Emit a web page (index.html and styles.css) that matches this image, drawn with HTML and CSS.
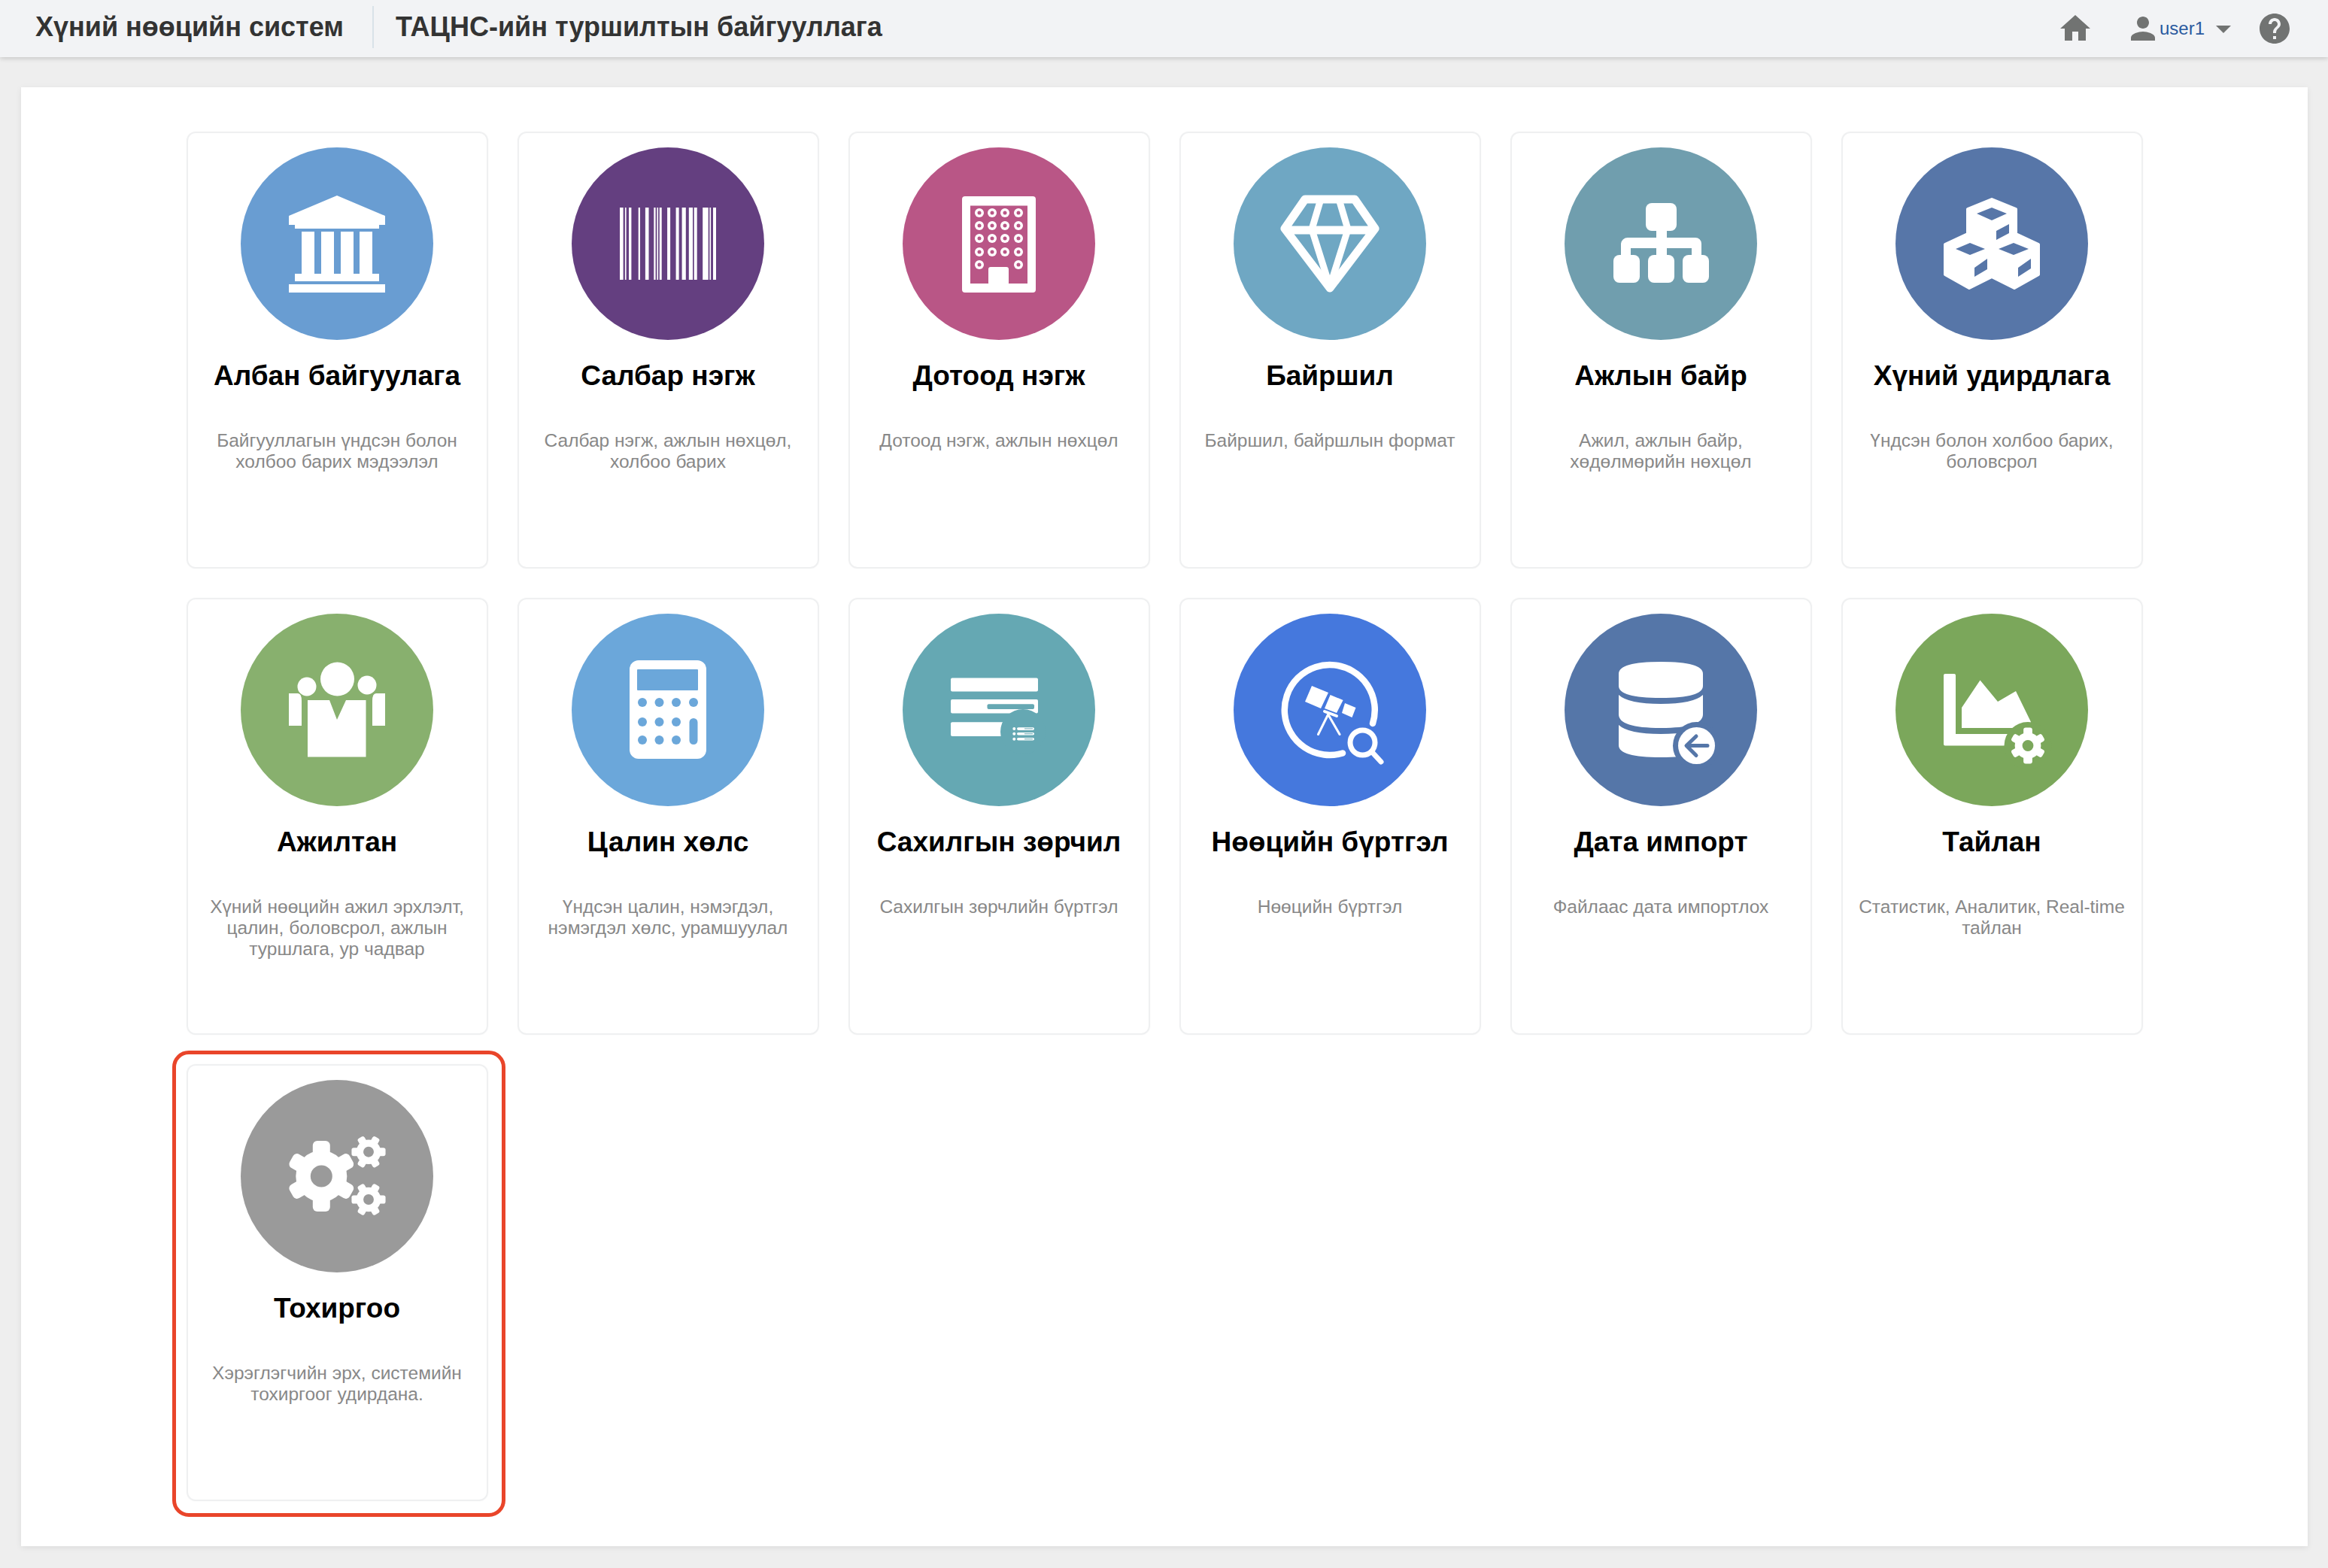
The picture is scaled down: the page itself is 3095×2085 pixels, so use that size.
FILE: index.html
```html
<!DOCTYPE html>
<html lang="en">
<head>
    <meta charset="UTF-8">
    <title>Хүний нөөцийн систем</title>
    <link rel="stylesheet" href="styles.css">
</head>
<body>
    <svg class="sprite" aria-hidden="true">
        <defs>
            <g id="gear">
                <circle r="34"/>
                <rect x="-11.500" y="-47" width="23" height="94" rx="6"/>
                <rect x="-10.500" y="-46" width="21" height="92" rx="6" transform="rotate(60)"/>
                <rect x="-10.500" y="-46" width="21" height="92" rx="6" transform="rotate(120)"/>
                <circle r="14.500" fill="currentColor"/>
            </g>
        </defs>
    </svg>

    <header class="topbar">
        <div class="brand">Хүний нөөцийн систем</div>
        <div class="org">ТАЦНС-ийн туршилтын байгууллага</div>
        <nav class="tools">
            <svg class="tool home" viewBox="0 0 24 24"><path d="M10 20v-6h4v6h5v-8h3L12 3 2 12h3v8z"/></svg>
            <div class="user">
                <svg class="tool" viewBox="0 0 24 24"><path d="M12 12c2.21 0 4-1.79 4-4s-1.79-4-4-4-4 1.79-4 4 1.79 4 4 4zm0 2c-2.67 0-8 1.34-8 4v2h16v-2c0-2.66-5.33-4-8-4z"/></svg>
                <span class="user-name">user1</span>
                <svg class="tool caret" viewBox="0 0 24 24"><path d="M7 10l5 5 5-5z"/></svg>
            </div>
            <svg class="tool" viewBox="0 0 24 24"><path d="M12 2C6.48 2 2 6.48 2 12s4.48 10 10 10 10-4.48 10-10S17.52 2 12 2zm1 17h-2v-2h2v2zm2.07-7.75l-.9.92C13.45 12.9 13 13.5 13 15h-2v-.5c0-1.1.45-2.1 1.17-2.83l1.24-1.26c.37-.36.59-.86.59-1.41 0-1.1-.9-2-2-2s-2 .9-2 2H8c0-2.21 1.79-4 4-4s4 1.79 4 4c0 .88-.36 1.68-.93 2.25z"/></svg>
        </nav>
    </header>

    <main class="panel">
        <div class="cards">
            <a class="card">
                <svg class="icon c-bank" viewBox="0 0 256 256">
                    <circle class="bg" cx="128" cy="128" r="128"/>
                    <path class="fg" d="M128 64l64 27v12h-8v5H72v-5h-8V91zM81 112h17v56H81zM107 112h17v56h-17zM133 112h17v56h-17zM158 112h17v56h-17zM72 168h112v10H72zM64 182h128v11H64z"/>
                </svg>
                <h2>Албан байгуулага</h2>
                <p>Байгууллагын үндсэн болон холбоо барих мэдээлэл</p>
            </a>
            <a class="card">
                <svg class="icon c-branch" viewBox="0 0 256 256">
                    <circle class="bg" cx="128" cy="128" r="128"/>
                    <path class="fg" d="M64 80h4.6v96H64zM70.9 80h1.7v96h-1.7zM76 80h3.4v96H76zM88.7 80H91v96h-2.3zM97.9 80h4.6v96h-4.6zM109.3 80h2.3v96h-2.3zM113.4 80h1.7v96h-1.7zM116.8 80h2.9v96h-2.9zM127.1 80h4v96h-4zM138.6 80h4v96h-4zM146.6 80h5.2v96h-5.2zM155.8 80h5.2v96h-5.2zM162.7 80h4v96h-4zM174.2 80h7.5v96h-7.5zM183.4 80h1.7v96h-1.7zM188 80h4v96h-4z"/>
                </svg>
                <h2>Салбар нэгж</h2>
                <p>Салбар нэгж, ажлын нөхцөл, холбоо барих</p>
            </a>
            <a class="card">
                <svg class="icon c-dept" viewBox="0 0 256 256">
                    <circle class="bg" cx="128" cy="128" r="128"/>
                    <rect class="fg" x="79" y="65" width="98" height="128" rx="4"/>
                    <rect class="cut" x="90" y="77.5" width="76" height="103.5"/>
                    <rect class="fg" x="114" y="159" width="27" height="24" rx="3"/>
                    <g class="fg">
                        <circle cx="102" cy="87" r="6"/><circle cx="119" cy="87" r="6"/><circle cx="136" cy="87" r="6"/><circle cx="154" cy="87" r="6"/>
                        <circle cx="102" cy="104" r="6"/><circle cx="119" cy="104" r="6"/><circle cx="136" cy="104" r="6"/><circle cx="154" cy="104" r="6"/>
                        <circle cx="102" cy="121" r="6"/><circle cx="119" cy="121" r="6"/><circle cx="136" cy="121" r="6"/><circle cx="154" cy="121" r="6"/>
                        <circle cx="102" cy="139" r="6"/><circle cx="119" cy="139" r="6"/><circle cx="136" cy="139" r="6"/><circle cx="154" cy="139" r="6"/>
                        <circle cx="102" cy="156" r="6"/><circle cx="154" cy="156" r="6"/>
                    </g>
                    <g class="cut">
                        <circle cx="102" cy="87" r="2.5"/><circle cx="119" cy="87" r="2.5"/><circle cx="136" cy="87" r="2.5"/><circle cx="154" cy="87" r="2.5"/>
                        <circle cx="102" cy="104" r="2.5"/><circle cx="119" cy="104" r="2.5"/><circle cx="136" cy="104" r="2.5"/><circle cx="154" cy="104" r="2.5"/>
                        <circle cx="102" cy="121" r="2.5"/><circle cx="119" cy="121" r="2.5"/><circle cx="136" cy="121" r="2.5"/><circle cx="154" cy="121" r="2.5"/>
                        <circle cx="102" cy="139" r="2.5"/><circle cx="119" cy="139" r="2.5"/><circle cx="136" cy="139" r="2.5"/><circle cx="154" cy="139" r="2.5"/>
                        <circle cx="102" cy="156" r="2.5"/><circle cx="154" cy="156" r="2.5"/>
                    </g>
                </svg>
                <h2>Дотоод нэгж</h2>
                <p>Дотоод нэгж, ажлын нөхцөл</p>
            </a>
            <a class="card">
                <svg class="icon c-place" viewBox="0 0 256 256">
                    <circle class="bg" cx="128" cy="128" r="128"/>
                    <path class="line" stroke-width="11" d="M95 69h66l27 39-60 79-60-79zM70 110h116"/>
                    <path class="line" stroke-width="9" d="M115 72l-11 37 24 76 24-76-11-37"/>
                </svg>
                <h2>Байршил</h2>
                <p>Байршил, байршлын формат</p>
            </a>
            <a class="card">
                <svg class="icon c-job" viewBox="0 0 256 256">
                    <circle class="bg" cx="128" cy="128" r="128"/>
                    <path class="fg" d="M122 105h14v39h-14zM84 120h90a8 8 0 0 1 8 8v16h-13v-10H88v10H75v-16a9 9 0 0 1 9-8z"/>
                    <rect class="fg" x="108" y="74" width="41" height="37" rx="8"/>
                    <rect class="fg" x="65" y="143" width="35" height="37" rx="8"/>
                    <rect class="fg" x="111" y="143" width="35" height="37" rx="8"/>
                    <rect class="fg" x="157" y="143" width="35" height="37" rx="8"/>
                </svg>
                <h2>Ажлын байр</h2>
                <p>Ажил, ажлын байр, хөдөлмөрийн нөхцөл</p>
            </a>
            <a class="card">
                <svg class="icon c-people" viewBox="0 0 256 256">
                    <circle class="bg" cx="128" cy="128" r="128"/>
                    <path class="fg" fill-rule="evenodd" stroke="#fff" stroke-width="4" stroke-linejoin="round" d="M128 69l32 13v33l30 14v40l-32 18-30-15-30 15-32-18v-40l30-14V82z"/>
                    <path class="cut" d="M128 80l20 8-20 9-20-9zM134 111l17-9v12l-17 9zM80 135l19-8 20 8-20 8zM105 160l17-12v14l-17 10zM137 135l20-8 20 8-20 8zM163 160l17-12v13l-17 11z"/>
                </svg>
                <h2>Хүний удирдлага</h2>
                <p>Үндсэн болон холбоо барих, боловсрол</p>
            </a>

            <a class="card">
                <svg class="icon c-staff" viewBox="0 0 256 256">
                    <circle class="bg" cx="128" cy="128" r="128"/>
                    <g class="fg">
                        <circle cx="128.5" cy="87" r="22.5"/>
                        <circle cx="88" cy="97" r="12.5"/>
                        <circle cx="168" cy="95" r="12.5"/>
                        <path d="M89 115h29l10 26 12-26h26.500v75.500H89zM64 106h12q5 0 5 10v33H64zM192 106h-12q-5 0-5 10v33h17z"/>
                    </g>
                </svg>
                <h2>Ажилтан</h2>
                <p>Хүний нөөцийн ажил эрхлэлт, цалин, боловсрол, ажлын туршлага, ур чадвар</p>
            </a>
            <a class="card">
                <svg class="icon c-pay" viewBox="0 0 256 256">
                    <circle class="bg" cx="128" cy="128" r="128"/>
                    <rect class="fg" x="77" y="62" width="102" height="131" rx="12"/>
                    <rect class="cut" x="87" y="74" width="81" height="28" rx="1"/>
                    <g class="cut">
                        <circle cx="94" cy="118" r="6"/><circle cx="116.500" cy="118" r="6"/><circle cx="139" cy="118" r="6"/><circle cx="162" cy="118" r="6"/>
                        <circle cx="94" cy="144" r="6"/><circle cx="116.500" cy="144" r="6"/><circle cx="139" cy="144" r="6"/>
                        <circle cx="94" cy="168" r="6"/><circle cx="116.500" cy="168" r="6"/><circle cx="139" cy="168" r="6"/>
                        <rect x="156.500" y="139" width="11" height="35" rx="5.500"/>
                    </g>
                </svg>
                <h2>Цалин хөлс</h2>
                <p>Үндсэн цалин, нэмэгдэл, нэмэгдэл хөлс, урамшуулал</p>
            </a>
            <a class="card">
                <svg class="icon c-discipline" viewBox="0 0 256 256">
                    <circle class="bg" cx="128" cy="128" r="128"/>
                    <rect class="fg" x="64" y="85.500" width="116" height="18" rx="2"/>
                    <rect class="fg" x="64" y="114" width="116" height="18.500" rx="2"/>
                    <rect class="cut" x="112.500" y="120.300" width="62.500" height="6.700" rx="2"/>
                    <rect class="fg" x="64" y="144.300" width="72" height="18.700" rx="2"/>
                    <circle class="cut" cx="160" cy="157" r="30"/>
                    <g class="fg">
                        <circle cx="148.300" cy="153" r="2"/><circle cx="148.300" cy="159.700" r="2"/><circle cx="148.300" cy="166.700" r="2"/>
                        <rect x="152" y="151.200" width="23" height="3.700" rx="1.800"/>
                        <rect x="152" y="157.900" width="23" height="3.700" rx="1.800"/>
                        <rect x="152" y="164.900" width="23" height="3.700" rx="1.800"/>
                    </g>
                    <g class="cut">
                        <rect x="162" y="152.500" width="11" height="1"/>
                        <rect x="162" y="159.200" width="11" height="1"/>
                        <rect x="162" y="166.200" width="11" height="1"/>
                    </g>
                </svg>
                <h2>Сахилгын зөрчил</h2>
                <p>Сахилгын зөрчлийн бүртгэл</p>
            </a>
            <a class="card">
                <svg class="icon c-audit" viewBox="0 0 256 256">
                    <circle class="bg" cx="128" cy="128" r="128"/>
                    <path class="line" stroke-linecap="butt" stroke-width="8.500" d="M185 146A60 60 0 1 0 145 185.500"/>
                    <circle class="line" stroke-width="7" cx="171.500" cy="171.500" r="16.500"/>
                    <path class="line" stroke-width="7" d="M185 185l11 12"/>
                    <path class="fg" d="M104 96l22 9-10 21-21-9zM128.600 108l17 7-8.600 17-16-6zM148 119l14.500 6-5 13-13.500-6z"/>
                    <path class="line" stroke-width="4" stroke-linecap="butt" d="M121 130l16 6"/>
                    <path class="line" stroke-width="3" stroke-linecap="butt" d="M112.500 160.500L125.700 134l15.300 26.500"/>
                </svg>
                <h2>Нөөцийн бүртгэл</h2>
                <p>Нөөцийн бүртгэл</p>
            </a>
            <a class="card">
                <svg class="icon c-data" viewBox="0 0 256 256">
                    <circle class="bg" cx="128" cy="128" r="128"/>
                    <path class="fg" d="M72 80Q72 64 128 64T184 80V96Q184 112 128 112T72 96zM72 108Q85 120 128 120T184 108V134Q184 152 128 152T72 134zM72 148Q85 160 128 160T184 148V175Q184 191 128 191T72 175z"/>
                    <circle class="cut" cx="175.500" cy="175.500" r="31.500"/>
                    <circle class="fg" cx="175.500" cy="175.500" r="24.500"/>
                    <path class="arrow" d="M190 175.500h-27M175 163l-13 12.500 13 13"/>
                </svg>
                <h2>Дата импорт</h2>
                <p>Файлаас дата импортлох</p>
            </a>
            <a class="card">
                <svg class="icon c-report" viewBox="0 0 256 256">
                    <circle class="bg" cx="128" cy="128" r="128"/>
                    <path class="fg" d="M64 82a2 2 0 0 1 2-2h12a2 2 0 0 1 2 2v78h80v15.500H66a2 2 0 0 1-2-2zM88 125l24.500-36.400L136 117l24-14 20 41v8H88z"/>
                    <circle class="cut" cx="176" cy="175.500" r="31.500"/>
                    <use class="fg" href="#gear" transform="translate(176 175.500) scale(0.510)"/>
                </svg>
                <h2>Тайлан</h2>
                <p>Статистик, Аналитик, Real-time тайлан</p>
            </a>

            <a class="card card-marked">
                <svg class="icon c-settings" viewBox="0 0 256 256">
                    <circle class="bg" cx="128" cy="128" r="128"/>
                    <use class="fg" href="#gear" transform="translate(107.300 128)"/>
                    <use class="fg" href="#gear" transform="translate(170 95.700) rotate(90) scale(0.480)"/>
                    <use class="fg" href="#gear" transform="translate(170 159) rotate(90) scale(0.480)"/>
                </svg>
                <h2>Тохиргоо</h2>
                <p>Хэрэглэгчийн эрх, системийн тохиргоог удирдана.</p>
            </a>
        </div>
    </main>
</body>
</html>
```

FILE: styles.css
```css
* {
    box-sizing: border-box;
}

body {
    margin: 0;
    min-height: 100vh;
    background-color: #eeeeee;
    color: #333;
    font-family: "Liberation Sans", Arial, sans-serif;
}

.sprite {
    display: block;
    width: 0;
    height: 0;
}

/* top bar */
.topbar {
    display: flex;
    align-items: center;
    height: 76px;
    padding: 0 47px;
    background-color: #f2f3f5;
    box-shadow: 0 2px 6px rgba(0, 0, 0, 0.16);
}

.brand,
.org {
    font-size: 36px;
    font-weight: bold;
    color: #333;
    line-height: 56px;
    margin-top: -4px;
}

.brand {
    padding-right: 38px;
    border-right: 2px solid #d9e2e8;
}

.org {
    padding-left: 29px;
}

.tools {
    display: flex;
    align-items: center;
    gap: 38px;
    margin-left: auto;
}

.tools .tool {
    display: block;
    width: 48px;
    height: 48px;
    fill: #717372;
}

.tools .home {
    margin-right: 4px;
}

.user {
    display: flex;
    align-items: center;
    margin-right: -18px;
}

.user-name {
    margin-left: -2px;
    color: #2a5a9f;
    font-size: 24px;
}

.tools .caret {
    margin-left: 1px;
}

/* main panel */
.panel {
    margin: 40px 27px 29px 28px;
    padding: 59px 0 60px;
    background-color: #fff;
    box-shadow: 0 2px 8px rgba(0, 0, 0, 0.08);
}

.cards {
    display: grid;
    grid-template-columns: repeat(6, 401px);
    column-gap: 39px;
    row-gap: 39px;
    justify-content: center;
}

.card {
    position: relative;
    display: block;
    height: 581px;
    padding: 19px 20px 0;
    border: 2px solid #eff0f1;
    border-radius: 12px;
    box-shadow: 0 0 2px rgba(0, 0, 0, 0.04);
    text-align: center;
}

.card h2 {
    margin: 26px 0 0;
    font-size: 37px;
    line-height: 44px;
    color: #000;
}

.card p {
    margin: 50px 0 0;
    font-size: 24.5px;
    line-height: 28px;
    color: #888;
}

/* red highlight drawn over the settings card */
.card-marked::after {
    content: "";
    position: absolute;
    top: -20px;
    right: -25px;
    bottom: -23px;
    left: -21px;
    border: 5px solid #e9452a;
    border-radius: 22px;
}

/* round icons */
.icon {
    display: block;
    width: 256px;
    height: 256px;
    margin: 0 auto;
}

.icon .bg,
.icon .cut {
    fill: currentColor;
}

.icon .fg {
    fill: #fff;
}

.icon .line {
    fill: none;
    stroke: #fff;
    stroke-linecap: round;
    stroke-linejoin: round;
}

.icon .arrow {
    fill: none;
    stroke: currentColor;
    stroke-width: 5;
    stroke-linecap: round;
    stroke-linejoin: round;
}

.c-bank { color: #699dd2; }
.c-branch { color: #643f80; }
.c-dept { color: #b95686; }
.c-place { color: #6fa7c3; }
.c-job { color: #709eae; }
.c-people { color: #5776a8; }
.c-staff { color: #88b06e; }
.c-pay { color: #6ba7da; }
.c-discipline { color: #65a8b3; }
.c-audit { color: #4578dd; }
.c-data { color: #5576a8; }
.c-report { color: #7ba75b; }
.c-settings { color: #9a9a9a; }
```
